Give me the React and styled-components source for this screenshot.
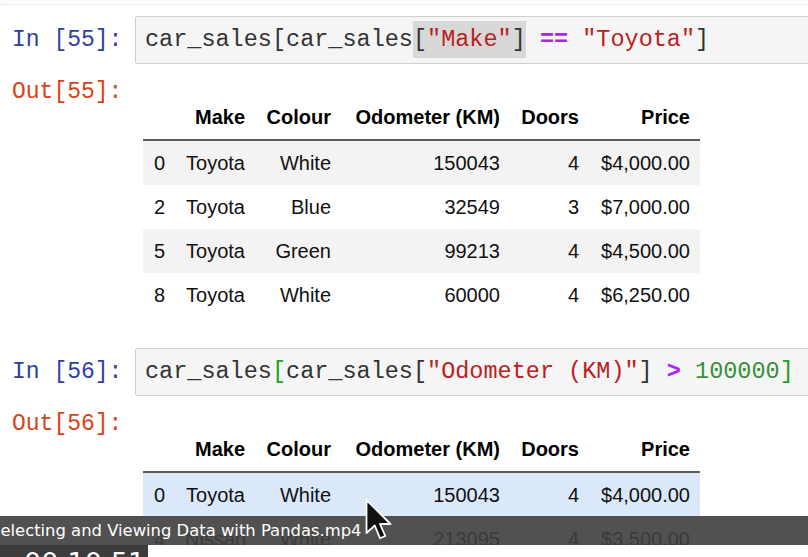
import React from 'react';
import styled, { createGlobalStyle } from 'styled-components';

const colors = {
  inPrompt: '#303f9f',
  outPrompt: '#d84315',
  code: '#333333',
  string: '#ba2121',
  operator: '#aa22ff',
  number: '#3a8f3a',
  bracket: '#22a022',
  boxBg: '#f5f5f5',
  boxBorder: '#cfcfcf',
  stripe: '#f3f3f3',
  hover: '#dbe8fa',
};

const mono = '"Liberation Mono", "DejaVu Sans Mono", monospace';
const sans = '"Liberation Sans", Arial, sans-serif';

const GlobalStyle = createGlobalStyle`
  body {
    margin: 0;
    background: #fff;
    overflow: hidden;
  }
`;

const Page = styled.div`
  position: relative;
  width: 808px;
  height: 557px;
  overflow: hidden;
  background: #fff;
`;

const TopRule = styled.div`
  height: 4px;
  background: #fbfbfb;
  border-bottom: 1px dotted #e2e2e2;
`;

const Cell = styled.div`
  margin-top: ${(p) => p.$gap}px;
`;

const Row = styled.div`
  display: flex;
  align-items: flex-start;
  margin-top: ${(p) => p.$gap || 0}px;
`;

const Prompt = styled.div`
  flex: none;
  width: 123px;
  padding-left: 12px;
  font-family: ${mono};
  font-size: 23px;
  line-height: ${(p) => p.$lh}px;
  color: ${(p) => (p.$out ? colors.outPrompt : colors.inPrompt)};
  white-space: pre;
`;

const InputBox = styled.div`
  flex: 1;
  height: 48px;
  box-sizing: border-box;
  margin-right: -20px;
  padding-left: 9px;
  border: 1px solid ${colors.boxBorder};
  border-radius: 2px;
  background: ${colors.boxBg};
  font-family: ${mono};
  font-size: 23.5px;
  line-height: 46px;
  color: ${colors.code};
  white-space: pre;
`;

const Tok = styled.span`
  color: ${(p) => p.$c};
  font-weight: ${(p) => (p.$bold ? 700 : 400)};
`;

const Match = styled.span`
  background: #d8d8d8;
  padding: 5px 0;
`;

const Output = styled.div`
  padding-top: 19px;
  padding-left: 8px;
`;

const Table = styled.table`
  border-collapse: collapse;
  table-layout: fixed;
  width: 557px;
  font-family: ${sans};
  font-size: 20px;
  color: #111;
`;

const HeadCell = styled.th`
  height: 43px;
  padding: 0 10px;
  text-align: right;
  font-weight: 700;
  color: #000;
  border-bottom: 2px solid #5c5c5c;
`;

const BodyRow = styled.tr`
  background: ${(p) => (p.$hover ? colors.hover : p.$stripe ? colors.stripe : 'transparent')};
`;

const BodyCell = styled.td`
  height: 44px;
  padding: 0 10px;
  text-align: right;
  white-space: nowrap;
`;

const PlayerBar = styled.div`
  position: absolute;
  left: 0;
  top: 516px;
  width: 808px;
  height: 29px;
  background: rgba(62, 62, 62, 0.9);
  color: #fff;
  font-family: "DejaVu Sans", sans-serif;
  font-size: 16.4px;
  line-height: 29px;
  white-space: nowrap;
  overflow: hidden;
`;

const Title = styled.span`
  display: block;
  margin-left: -10px;
`;

const PlayerStrip = styled.div`
  position: absolute;
  left: 0;
  top: 545px;
  width: 808px;
  height: 12px;
  display: flex;
  background: #fff;
  overflow: hidden;
`;

const TimeBox = styled.div`
  width: 148px;
  height: 100%;
  background: #3c3c3c;
  color: #fff;
  font-family: "DejaVu Sans", sans-serif;
  font-size: 27px;
  line-height: 36px;
  padding-left: 24px;
  box-sizing: border-box;
  white-space: nowrap;
`;

const Cursor = styled.svg`
  position: absolute;
  left: 365px;
  top: 498px;
`;

const columns = ['', 'Make', 'Colour', 'Odometer (KM)', 'Doors', 'Price'];
const widths = [32, 80, 86, 169, 79, 111];

const toyotas = [
  ['0', 'Toyota', 'White', '150043', '4', '$4,000.00'],
  ['2', 'Toyota', 'Blue', '32549', '3', '$7,000.00'],
  ['5', 'Toyota', 'Green', '99213', '4', '$4,500.00'],
  ['8', 'Toyota', 'White', '60000', '4', '$6,250.00'],
];

const highMileage = [
  ['0', 'Toyota', 'White', '150043', '4', '$4,000.00'],
  ['4', 'Nissan', 'White', '213095', '4', '$3,500.00'],
];

const DataFrame = ({ rows, hoverRow }) => (
  <Table>
    <colgroup>
      {widths.map((w, i) => (
        <col key={i} style={{ width: w }} />
      ))}
    </colgroup>
    <thead>
      <tr>
        {columns.map((c, i) => (
          <HeadCell key={i}>{c}</HeadCell>
        ))}
      </tr>
    </thead>
    <tbody>
      {rows.map((r, i) => (
        <BodyRow key={i} $stripe={i % 2 === 0} $hover={i === hoverRow}>
          {r.map((v, j) => (
            <BodyCell key={j}>{v}</BodyCell>
          ))}
        </BodyRow>
      ))}
    </tbody>
  </Table>
);

const App = () => {
  return (
    <Page>
      <GlobalStyle />
      <TopRule />

      <Cell $gap={11}>
        <Row>
          <Prompt $lh={48}>In [55]:</Prompt>
          <InputBox>
            car_sales[car_sales
            <Match>[<Tok $c={colors.string}>"Make"</Tok>]</Match>{' '}
            <Tok $c={colors.operator} $bold>==</Tok>{' '}
            <Tok $c={colors.string}>"Toyota"</Tok>]
          </InputBox>
        </Row>
        <Row $gap={13}>
          <Prompt $lh={30} $out>Out[55]:</Prompt>
          <Output>
            <DataFrame rows={toyotas} />
          </Output>
        </Row>
      </Cell>

      <Cell $gap={31}>
        <Row>
          <Prompt $lh={48}>In [56]:</Prompt>
          <InputBox>
            car_sales<Tok $c={colors.bracket}>[</Tok>car_sales[
            <Tok $c={colors.string}>"Odometer (KM)"</Tok>]{' '}
            <Tok $c={colors.operator} $bold>&gt;</Tok>{' '}
            <Tok $c={colors.number}>100000</Tok>
            <Tok $c={colors.bracket}>]</Tok>
          </InputBox>
        </Row>
        <Row $gap={13}>
          <Prompt $lh={30} $out>Out[56]:</Prompt>
          <Output>
            <DataFrame rows={highMileage} hoverRow={0} />
          </Output>
        </Row>
      </Cell>

      <PlayerBar>
        <Title>Selecting and Viewing Data with Pandas.mp4</Title>
      </PlayerBar>
      <PlayerStrip>
        <TimeBox>00:10:51</TimeBox>
      </PlayerStrip>

      <Cursor width="30" height="46" viewBox="0 0 20 30">
        <path
          d="M1 1 L1 23 L6.5 18 L10 26.5 L13.5 25 L10 17 L17 17 Z"
          fill="#111"
          stroke="#fff"
          strokeWidth="1.2"
          strokeLinejoin="round"
        />
      </Cursor>
    </Page>
  );
};

export default App;
